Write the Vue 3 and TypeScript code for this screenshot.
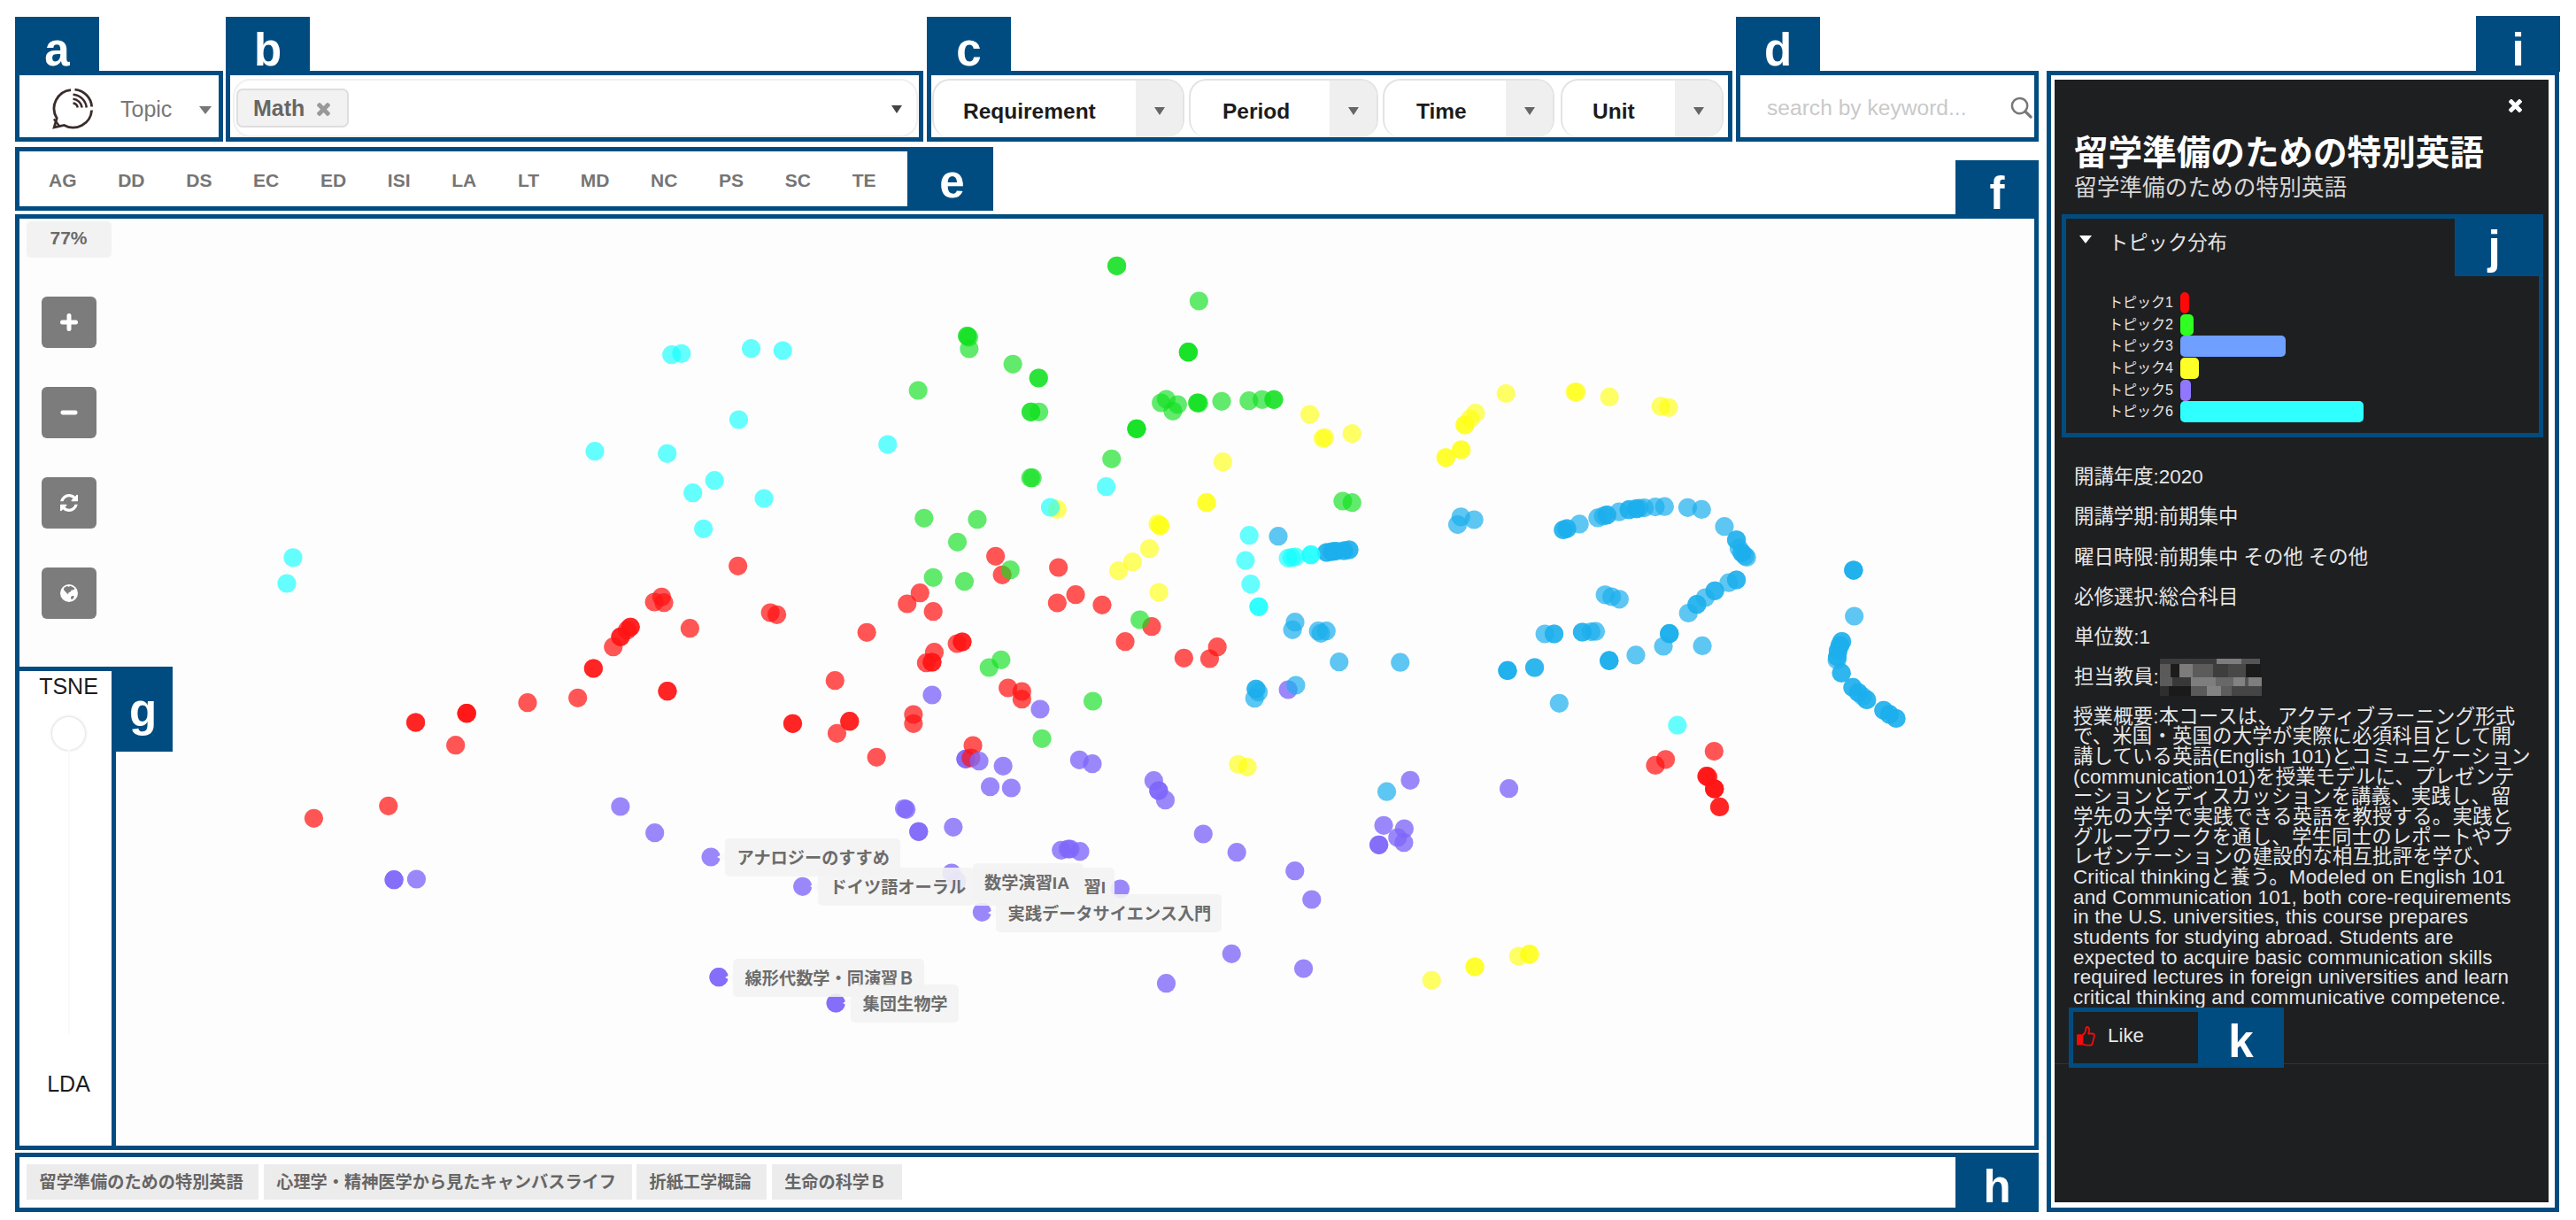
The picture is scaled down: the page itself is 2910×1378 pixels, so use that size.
<script setup lang="ts">
type Hue = 'red' | 'green' | 'cyan' | 'yellow' | 'blue' | 'purple'
// x, y, and how many courses share that spot
type Spot = [number, number, number?]

const fills: Record<Hue, string> = {
  red: 'rgba(255,20,20,.72)',
  green: 'rgba(15,225,30,.65)',
  cyan: 'rgba(20,255,255,.65)',
  yellow: 'rgba(255,255,20,.65)',
  blue: 'rgba(28,174,236,.71)',
  purple: 'rgba(125,102,250,.78)',
}

const clusters: { hue: Hue; spots: Spot[] }[] = [
  { hue: 'purple', spots: [
    [445.1, 993.7, 2], [470.5, 993], [700.9, 911], [739.7, 940.7], [803.1, 968], [906.7, 1001.3], [812, 1103.7, 2], [944.2, 1133, 2],
    [1053, 785], [1175, 801], [1091, 857.3, 2], [1133.2, 865.3], [1118.6, 888.7], [1142.4, 890],
    [1219.4, 858.3], [1234, 862.7], [1303.4, 881.7], [1308.9, 893, 2], [1316.5, 903.7], [1021.6, 913.3], [1023.7, 914.3],
    [1037.8, 939.3, 2], [1076.9, 934.3], [1198.8, 960.3], [1206.4, 959], [1209, 959], [1220, 961.7], [1359.3, 942],
    [1397.2, 962.7], [1462.8, 983.7], [1481.8, 1016], [1563.1, 932.3], [1586.4, 936], [1578.8, 946], [1585.9, 951.7],
    [1557.7, 954.3, 2], [1109.4, 1030.3], [1265.5, 1004], [1391.3, 1077.3], [1472.6, 1094], [1317.5, 1110.7],
    [1455.2, 779], [1593.1, 881.3], [1704.6, 890.7], [1075, 986], [1081, 995],
  ] },
  { hue: 'red', spots: [
    [833.7, 639.3], [739.2, 680], [747.5, 674.3], [750, 680.7], [870.2, 692], [877.6, 694.3], [779.4, 709.7],
    [712.2, 708.3, 2], [708.5, 711.7], [701, 719.3, 2], [692.8, 730.7], [670.4, 755, 2], [979.2, 714.3],
    [1124.7, 628.3], [1132.2, 649.3], [1039.3, 669.7], [1024.8, 682], [1054.2, 690.7], [1081.2, 727], [1087, 725, 2],
    [1055.5, 736.7], [1046.4, 748.7], [1053, 748, 2], [1195.7, 641], [1215.1, 671.7], [1194.4, 681], [1245, 683.3],
    [1301, 707.7], [1271.1, 724.7], [1337.4, 743.3], [1375.2, 730.7], [1366.5, 744], [1936.4, 848.6], [1881.6, 857.8],
    [1870, 864.4], [1928.1, 876.7, 2], [1929.7, 877.7], [1936.8, 891, 3], [1942.6, 911.4, 2], [354.5, 924.3],
    [438.8, 910.3], [469.6, 816, 2], [527.2, 805.7, 3], [514.7, 841.7], [596, 793.7], [652.7, 788.3], [754, 780.7, 2],
    [943.3, 768.7], [895.5, 817.3, 2], [945.5, 828.3], [959.8, 814.7, 2], [990.2, 855.3], [1138.7, 777], [1154.4, 781],
    [1154.4, 789.7], [1031.9, 807], [1031.9, 817.3], [1099.1, 842], [1096.9, 856],
  ] },
  { hue: 'purple', spots: [[1106.1, 859.7]] },
  { hue: 'green', spots: [
    [1092.8, 379.5, 2], [1094.5, 381], [1094.9, 394], [1144.2, 411.3], [1037.2, 441], [1043.9, 585.3], [1104, 586.7],
    [1081.6, 612.3], [1054.2, 652.3], [1089.5, 656.7], [1141.3, 643.7], [1130.9, 745.3], [1117.3, 754], [1261.6, 300.3, 2],
    [1354.4, 340], [1342.4, 397.7, 3], [1173.3, 427, 2], [1164.6, 465.3, 2], [1173.7, 465.3], [1311.7, 455],
    [1317.5, 451], [1330.4, 457], [1325, 464.3], [1352.8, 455, 2], [1354.4, 455.3], [1380.1, 453.3], [1410.8, 452.7],
    [1425.7, 451.3], [1439, 451.3, 2], [1284, 484.3, 3], [1255.8, 518.3], [1164.2, 539.7], [1166.2, 539.7],
    [1516.9, 566], [1527.3, 567.7], [1287.7, 700], [1234.6, 792], [1177.1, 834.3],
  ] },
  { hue: 'yellow', spots: [
    [1479.6, 468], [1494.5, 495.3], [1496.6, 494.3], [1527.3, 489.7], [1381.4, 521.7], [1363.1, 567.7, 2], [1308, 591.7],
    [1310.5, 593.7, 2], [1298.5, 619.7], [1279.4, 634.7], [1263.6, 644.7], [1309.2, 669], [1194.4, 575.3],
    [1701.3, 444.5], [1666.9, 466.6], [1660.7, 473], [1654.9, 480, 2], [1650.7, 508, 2], [1633.3, 516.8, 2],
    [1779.2, 442.8], [1780.9, 442.8], [1818.2, 448.4], [1876.2, 458.9], [1885, 460.3], [1398.9, 863.3], [1409.2, 866.3],
    [1617.3, 1107.3], [1666.1, 1092, 2], [1715.4, 1080], [1727.9, 1077.7, 2],
  ] },
  { hue: 'blue', spots: [
    [1444, 605.7], [1498.7, 624, 2], [1504.9, 623, 2], [1509, 622.5, 2], [1518.2, 622, 2], [1524, 621, 2], [1463, 702.7],
    [1460.1, 711.3], [1489.2, 712.7], [1492.1, 715.3], [1498.3, 712.7], [1512.8, 747.7], [1581.8, 748.2],
    [1650.3, 583.8], [1646.6, 592.6], [1665.2, 587], [1766, 598.5, 2], [1770.1, 597.1, 2], [1784.2, 591.9],
    [1804.9, 584.9], [1811.2, 582.8], [1815.3, 581.7, 2], [1829, 578.2], [1840.2, 575.7, 2], [1848.5, 574.7, 2],
    [1851.8, 574], [1857.6, 573.6], [1870, 572.6], [1880.4, 572.2], [1906.5, 573.3], [1922.3, 575.4], [1948, 594.7],
    [1961.6, 609.8, 2], [1964.5, 619.2], [1967.9, 624.5, 2], [1971.2, 628], [1973.2, 629.4], [1952.9, 658.2],
    [1961.6, 655, 2], [1937.2, 667.3, 2], [1926.4, 675], [1916.9, 682.7, 2], [1907.3, 692.5], [1813.2, 671.8],
    [1820.7, 674], [1829.4, 676.8], [1745.2, 716], [1755.6, 716, 2], [1787.5, 714, 2], [1797.5, 713.6], [1802.5, 713.2],
    [1885.8, 715.7, 3], [1879.1, 730], [1923.1, 729.4], [1848, 739.9], [1817.8, 746.2, 3], [1703, 757.4, 3],
    [1733.6, 754, 2], [1761.4, 794.3], [2093.9, 644.1, 3], [2094.7, 696], [2080.6, 724.5, 2], [2078.5, 729, 2],
    [2076.5, 735, 2], [2075.6, 742, 2], [2075.2, 745.5], [2080.2, 760.2, 2], [2093, 776.4, 2], [2099.3, 782.3, 2],
    [2104.2, 786.5], [2108.8, 790.4, 2], [2127.9, 802.3, 2], [2134.5, 806.9, 2], [2142, 811.5, 2], [1566.6, 894.2],
    [1463.9, 774], [1418.9, 778.3, 2], [1417.3, 788.7], [1421.6, 781.7],
  ] },
  { hue: 'cyan', spots: [
    [758.7, 400.7], [769.9, 399.3], [848.6, 393.7], [884.3, 396], [834.5, 474], [672, 509.7], [753.7, 512.3],
    [1002.8, 502], [807.2, 542.7], [782.7, 556.7], [863.1, 563], [794.7, 597.3], [331, 629.8], [324, 659],
    [1186.5, 573], [1249.6, 549.7], [1411.2, 604.7], [1407, 633], [1412.9, 659.7], [1422, 685.3, 2], [1455.2, 630.3],
    [1459.3, 629.7], [1463.5, 629], [1480.9, 626.7, 2], [1894.9, 819.2],
  ] },
]

const dots = clusters.flatMap(({ hue, spots }) =>
  spots.flatMap(([x, y, n = 1]) => Array.from({ length: n }, () => ({ x, y, fill: fills[hue] }))),
)

const tips = [
  { text: 'アナロジーのすすめ', x: 819, y: 947, arrow: true },
  { text: 'ドイツ語オーラル', x: 924, y: 980, w: 176, arrow: true },
  { text: '習I', x: 1100, y: 980, w: 159, arrow: false, end: true },
  { text: '数学演習IA', x: 1098.5, y: 975, w: 125, arrow: false },
  { text: '実践データサイエンス入門', x: 1125, y: 1010, arrow: true },
  { text: '線形代数学・同演習Ｂ', x: 828, y: 1083, w: 216, arrow: true },
  { text: '集団生物学', x: 961, y: 1112, arrow: true },
]

const filters = [
  { name: 'Requirement', w: 285, pad: 33, gap: 5 },
  { name: 'Period', w: 214, pad: 36, gap: 5 },
  { name: 'Time', w: 194, pad: 36, gap: 7 },
  { name: 'Unit', w: 184, pad: 34, gap: 0 },
]
const depts = ['AG', 'DD', 'DS', 'EC', 'ED', 'ISI', 'LA', 'LT', 'MD', 'NC', 'PS', 'SC', 'TE']
const history = ['留学準備のための特別英語', '心理学・精神医学から見たキャンバスライフ', '折紙工学概論', '生命の科学Ｂ']

const topics = [
  { name: 'トピック1', w: 10, color: '#ff0808' },
  { name: 'トピック2', w: 15, color: '#2fff21' },
  { name: 'トピック3', w: 119, color: '#6f9fff' },
  { name: 'トピック4', w: 21, color: '#ffff28' },
  { name: 'トピック5', w: 12, color: '#8f78ff' },
  { name: 'トピック6', w: 207, color: '#30ffff' },
]
const facts = ['開講年度:2020', '開講学期:前期集中', '曜日時限:前期集中 その他 その他', '必修選択:総合科目', '単位数:1']
const summary = [
  '授業概要:本コースは、アクティブラーニング形式',
  'で、米国・英国の大学が実際に必須科目として開',
  '講している英語(English 101)とコミュニケーション',
  '(communication101)を授業モデルに、プレゼンテ',
  'ーションとディスカッションを講義、実践し、留',
  '学先の大学で実践できる英語を教授する。実践と',
  'グループワークを通し、学生同士のレポートやプ',
  'レゼンテーションの建設的な相互批評を学び、',
  'Critical thinkingと養う。Modeled on English 101',
  'and Communication 101, both core-requirements',
  'in the U.S. universities, this course prepares',
  'students for studying abroad. Students are',
  'expected to acquire basic communication skills',
  'required lectures in foreign universities and learn',
  'critical thinking and communicative competence.',
]
// x, y, w, h, grey
const mosaic: [number, number, number, number, string][] = [
  [0, 0, 64, 6, '#3c3c3d'], [64, 0, 28, 6, '#7d7d7d'], [92, 0, 21, 6, '#555'],
  [0, 6, 12, 15, '#5a5a5b'], [12, 6, 10, 15, '#1c1c1d'], [22, 6, 15, 15, '#7c7c7c'], [37, 6, 23, 15, '#5b5b5b'],
  [60, 6, 17, 15, '#3e3e3f'], [77, 6, 20, 15, '#484849'], [97, 6, 17, 15, '#1b1b1c'],
  [0, 21, 14, 10, '#5b5b5b'], [14, 21, 21, 10, '#383839'], [35, 21, 28, 10, '#7e7e7e'], [63, 21, 20, 10, '#686868'],
  [83, 21, 13, 10, '#828282'], [96, 21, 4, 10, '#555'], [100, 21, 15, 10, '#7e7e7e'],
  [0, 31, 10, 11, '#2e2e2f'], [10, 31, 25, 11, '#1a1a1b'], [35, 31, 18, 11, '#5a5a5a'], [53, 31, 16, 11, '#838383'],
  [69, 31, 12, 11, '#5d5d5d'], [81, 31, 34, 11, '#454546'],
]
const times =
  'M1298 1322q0 40-28 68l-136 136q-28 28-68 28t-68-28l-294-294-294 294q-28 28-68 28t-68-28l-136-136q-28-28-28-68t28-68l294-294-294-294q-28-28-28-68t28-68l136-136q28-28 68-28t68 28l294 294 294-294q28-28 68-28t68 28l136 136q28 28 28 68t-28 68l-294 294 294 294q28 28 28 68z'
</script>

<template>
  <div class="page">
    <main class="left">
      <div class="topbar">
        <section class="frame view">
          <span class="tab above">a</span>
          <svg class="logo" viewBox="0 0 47 47" fill="none" stroke="#3a2c2b" stroke-width="2.8">
            <path d="M21 2.6A21 21 0 0 0 5.2 34.5L2.2 44.8 13.5 42.4A21 21 0 0 0 44.6 25.5" />
            <path d="M25.5 2.2a21 21 0 0 1 19.2 19.3" />
            <path d="M1.8 35.5l6.5 8" stroke-width="2.2" />
            <path d="M23.5 7.8a16.5 16.5 0 0 1 15.3 14.7M23.5 12.8a11.3 11.3 0 0 1 10.2 9.7M23.5 17.6a6 6 0 0 1 5.2 4.9" stroke-width="2.5" />
          </svg>
          <span class="topic">Topic</span>
          <i class="caret big"></i>
        </section>
        <section class="frame query">
          <span class="tab above">b</span>
          <div class="combo">
            <span class="chip">Math
              <svg viewBox="110 366 1188 1188"><path :d="times" fill="#999" /></svg>
            </span>
            <i class="caret dark"></i>
          </div>
        </section>
        <section class="frame filters">
          <span class="tab above">c</span>
          <div v-for="f in filters" :key="f.name" class="select" :style="{ width: f.w + 'px', marginRight: f.gap + 'px' }">
            <span :style="{ paddingLeft: f.pad + 'px' }">{{ f.name }}</span>
            <b><i class="caret"></i></b>
          </div>
        </section>
        <section class="frame search">
          <span class="tab above">d</span>
          <span>search by keyword...</span>
          <svg viewBox="0 0 26 26" fill="none" stroke="#777" stroke-width="2.6">
            <circle cx="11" cy="11" r="9" /><path d="M17.5 17.5L24 24" stroke-width="3.4" stroke-linecap="round" />
          </svg>
        </section>
      </div>

      <section class="frame depts">
        <span v-for="d in depts" :key="d">{{ d }}</span>
        <span class="tab side">e</span>
      </section>

      <section class="frame map">
        <span class="tab corner">f</span>
        <svg class="plot" viewBox="22 247 2276 1047">
          <circle v-for="(d, i) in dots" :key="i" :cx="d.x" :cy="d.y" r="10.6" :fill="d.fill" />
        </svg>
        <span
          v-for="t in tips" :key="t.text" class="tip" :class="{ arrow: t.arrow, end: t.end }"
          :style="{ left: t.x - 22 + 'px', top: t.y - 247 + 'px', width: t.w ? t.w + 'px' : undefined }"
        >{{ t.text }}</span>
        <div class="tools">
          <span class="zoom">77%</span>
          <div class="buttons">
            <button><svg viewBox="0 0 20 20"><path d="M10 2.5v15M2.5 10h15" stroke="#fff" stroke-width="5" stroke-linecap="round" /></svg></button>
            <button><svg viewBox="0 0 20 20"><path d="M2.8 10h14.4" stroke="#fff" stroke-width="4.8" stroke-linecap="round" /></svg></button>
            <button><svg viewBox="0 128 1536 1536"><g fill="#fff"><path d="M1511 1056q0 5-1 7-64 268-268 434.5t-478 166.500q-146 0-282.500-55t-243.500-157l-129 129q-19 19-45 19t-45-19-19-45v-448q0-26 19-45t45-19h448q26 0 45 19t19 45-19 45l-137 137q71 66 161 102t187 36q134 0 250-65t186-179q11-17 53-117 8-23 30-23h192q13 0 22.500 9.500t9.500 22.500z" /><path d="M1536 256v448q0 26-19 45t-45 19h-448q-26 0-45-19t-19-45 19-45l138-138q-148-137-349-137-134 0-250 65t-186 179q-11 17-53 117-8 23-30 23h-199q-13 0-22.500-9.500t-9.500-22.500v-7q65-268 270-434.500t480-166.500q146 0 284 55.500t245 156.500l130-129q19-19 45-19t45 19 19 45z" /></g></svg></button>
            <button><svg viewBox="0 0 20 20"><circle cx="10" cy="10" r="10" fill="#fff" /><path d="M4.500 3.800L7.500 2l2.500.8 1.500-1 3 1.400 2.200 1.800-1.700 1.300-2.500.4-.8 1.800-2 .6-.7 2.200-1.800-1.500-2.100-2.200-1.300-1.500zM12 14l2.500-1.200 1.400 1.300-1.600 2.300-1.900.6z" fill="#7c7c7c" /></svg></button>
          </div>
          <section class="blend">
            <span class="tab gtab">g</span>
            <span>TSNE</span>
            <i class="knob"></i>
            <i class="track"></i>
            <span>LDA</span>
          </section>
        </div>
      </section>

      <section class="frame history">
        <span v-for="h in history" :key="h" class="tag">{{ h }}</span>
        <span class="tab htab">h</span>
      </section>
    </main>

    <aside class="frame detail">
      <span class="tab itab">i</span>
      <div class="card">
        <svg class="close" viewBox="110 366 1188 1188"><path :d="times" fill="#fff" /></svg>
        <h1>留学準備のための特別英語</h1>
        <h2>留学準備のための特別英語</h2>
        <section class="chart">
          <span class="tab jtab">j</span>
          <div class="head"><i class="caret white"></i><span>トピック分布</span></div>
          <div v-for="t in topics" :key="t.name" class="row">
            <span>{{ t.name }}</span>
            <i :style="{ width: t.w + 'px', background: t.color }"></i>
          </div>
        </section>
        <div class="facts">
          <p v-for="f in facts" :key="f">{{ f }}</p>
          <p>担当教員:<svg class="mosaic" viewBox="0 0 115 42"><rect v-for="(m, i) in mosaic" :key="i" :x="m[0]" :y="m[1]" :width="m[2]" :height="m[3]" :fill="m[4]" /></svg></p>
        </div>
        <div class="summary"><div v-for="s in summary" :key="s">{{ s }}</div></div>
        <div class="foot">
          <div class="like">
            <svg viewBox="0 0 21 23" fill="none" stroke="#f00d0d" stroke-width="1.8" stroke-linejoin="round">
              <path d="M6.500 10.200C9 8.800 10 6.500 10.200 4c.1-1.800.4-3 1.600-3 2 0 2.600 2 2.200 4.200L13.300 8.500h4.200c2 0 2.900 1.500 2.300 3l-2 8c-.4 1.600-1.300 2.200-3 2.200h-3c-2 0-3.300-1.200-5.300-1.400z" />
              <path d="M1 10.200h4.200v10.300H1z" fill="#f00d0d" />
            </svg>
            <span>Like</span>
          </div>
          <span class="tab ktab">k</span>
        </div>
      </div>
    </aside>
  </div>
</template>

<style>
body { margin: 0; background: #fff; }
</style>

<style scoped>
.page {
  display: flex; gap: 9px; box-sizing: border-box; width: 2910px; height: 1378px; padding: 80px 19px 9px 17px;
  font-family: "Liberation Sans", "Noto Sans CJK JP", sans-serif; overflow: hidden; background: #fff;
}
.frame { position: relative; box-sizing: border-box; border: 5px solid #004c80; display: flex; }
.tab {
  position: absolute; width: 95px; background: #004c80; color: #fff; text-align: center;
  font: bold 51px "Liberation Sans", sans-serif;
}
.above { left: -5px; bottom: 100%; height: 61px; line-height: 75px; margin-bottom: 5px; }
.left { width: 2286px; }
.topbar { display: flex; height: 80px; }
.caret { width: 0; height: 0; border: 6.500px solid transparent; border-top: 9px solid #666; border-bottom: 0; }
.caret.big { border-width: 9px 7.500px 0; border-top-color: #777; margin: 8px 0 0 1px; }
.caret.dark { border-top-color: #444; margin-top: 2px; }
.caret.white { border-width: 9px 7px 0; border-top-color: #fff; }

.view { width: 235px; align-items: center; }
.logo { width: 47px; height: 47px; margin: 5px 0 0 37px; }
.topic { margin: 7px 0 0 30px; width: 88px; font-size: 25px; color: #777; }
.query { width: 788px; margin-left: 3px; padding: 4px 1px 0 3px; }
.combo {
  flex: 1; box-sizing: border-box; height: 66px; border: 2px solid #f0f0f0; border-radius: 20px;
  display: flex; align-items: center; justify-content: space-between; padding: 0 16px 0 2px;
}
.chip {
  box-sizing: border-box; width: 127px; height: 44px; border: 2px solid #dedede; border-radius: 7px; background: #f2f2f2;
  display: flex; align-items: center; gap: 14px; padding-left: 17px; font-weight: bold; font-size: 25px; color: #666;
}
.chip svg { width: 15px; height: 15px; margin-top: 2px; }
.filters { width: 910px; margin-left: 4px; padding: 4px 0 0 1px; }
.select {
  box-sizing: border-box; height: 66px; border: 2px solid #e3e3e3; border-bottom: 0; border-radius: 20px; overflow: hidden;
  display: flex; justify-content: space-between; color: #1c1c1c; font-weight: bold; font-size: 24.500px; line-height: 70px;
}
.select b { box-sizing: border-box; width: 53px; background: #efefef; display: flex; align-items: center; justify-content: center; padding: 5px 0 0 1px; }
.search { width: 342px; margin-left: 4px; align-items: center; padding: 3px 0 0 30px; font-size: 24.600px; color: #c9c9c9; }
.search svg { width: 25px; height: 25px; margin-left: 49px; }

.depts {
  width: 1105px; height: 72px; margin-top: 6px; padding: 3px 0 0 33px; align-items: center; gap: 46.700px;
  color: #757575; font-weight: bold; font-size: 21px;
}
.side { right: -5px; top: -5px; width: 97px; height: 72px; line-height: 79px; text-indent: 4px; }

.map { height: 1057px; margin-top: 4px; background: #fdfdfd; }
.map .corner { right: -5px; top: -66px; width: 94px; height: 66px; line-height: 76px; }
.plot { position: absolute; left: 0; top: 0; width: 2276px; height: 1047px; }
.tip {
  position: absolute; box-sizing: border-box; height: 43px; line-height: 46px; padding: 0 12px 0 13.600px; border-radius: 5px; white-space: nowrap;
  background: rgba(243, 243, 243, .9); color: #6c6c6c; font-size: 19.200px; font-weight: bold;
}
.tip.end { text-align: right; padding-right: 10px; border-radius: 0 5px 5px 0; }
.tip.arrow::before {
  content: ""; position: absolute; left: -9px; top: 16px; border: 5px solid transparent; border-right: 9px solid #fafafa; border-left: 0;
}
.tools { position: relative; width: 109px; display: flex; flex-direction: column; align-items: center; }
.zoom {
  width: 96px; height: 41px; margin-top: 3px; margin-left: 2px; border-radius: 5px; background: #f2f2f2;
  text-align: center; line-height: 38px; font-weight: bold; font-size: 21px; color: #6a6a6a;
}
.buttons { display: flex; flex-direction: column; gap: 44px; margin: 44px 0 0 3px; }
button {
  display: flex; align-items: center; justify-content: center; width: 62px; height: 58px; padding: 0 0 1px; border: 0;
  border-radius: 6px; background: #7c7c7c;
}
button svg { width: 20px; height: 20px; }
.blend {
  position: relative; box-sizing: border-box; width: 109px; height: 541px; margin-top: auto; border: solid #004c80;
  border-width: 5px 5px 0 0; background: #fff; display: flex; flex-direction: column; align-items: center;
  font-size: 25px; color: #1c1c1c; line-height: 29px; padding: 3px 0 55px 7px;
}
.gtab { left: 109px; top: -5px; width: 64px; height: 96px; line-height: 100px; text-indent: -3px; }
.knob { width: 37px; height: 37px; border-radius: 50%; background: #fff; box-shadow: 0 0 3px 1px #ddd; margin-top: 20px; box-sizing: border-box; }
.track { width: 2px; flex: 1; background: #fafafa; margin-bottom: 42px; }

.history { height: 67px; margin-top: 3px; padding: 8px 0 0 8px; gap: 5.500px; }
.tag { height: 40px; line-height: 41px; padding: 0 17.500px 0 14.500px; background: #ececec; font-size: 19.200px; font-weight: bold; color: #666; }
.htab { right: -5px; top: -5px; height: 67px; line-height: 77px; width: 94px; }

.detail { width: 579px; padding: 5px 7px 6px 4px; }
.itab { right: -6px; bottom: 100%; height: 63px; line-height: 78px; margin-bottom: 4px; }
.card { position: relative; width: 558px; background: #1e1f21; color: #e6e6e6; display: flex; flex-direction: column; }
.close { width: 15px; height: 15px; margin: 22px 0 0 513px; flex: none; }
h1 { margin: 18px 0 0 22px; font-size: 38.600px; line-height: 56px; color: #fff; font-weight: bold; white-space: nowrap; }
h2 { margin: 0 0 0 22px; font-size: 25.700px; line-height: 22px; font-weight: normal; color: #d6d6d6; }
.chart {
  position: relative; box-sizing: border-box; width: 544px; height: 252px; margin: 19px 0 0 8px; border: 5px solid #004c80; flex: none;
}
.jtab { right: 0; top: -1px; height: 66px; line-height: 68px; text-indent: -6px; }
.head { display: flex; align-items: center; height: 50px; margin-bottom: 32.500px; padding-left: 15px; font-size: 22.300px; }
.head span { margin-left: 19px; }
.head .caret { margin-top: -4px; }
.row { display: flex; align-items: center; height: 24.700px; font-size: 16px; line-height: 24px; }
.row span { width: 121px; text-align: right; }
.row i { height: 24px; margin-left: 8px; border-radius: 5px; }
.facts { margin: 22px 0 0 22px; font-size: 22.400px; }
.facts p { margin: 0; height: 45.300px; line-height: 45.300px; display: flex; align-items: center; }
.mosaic { width: 115px; height: 42px; margin-left: 1px; }
.summary { margin: 11px 0 0 21px; font-size: 22.400px; line-height: 22.660px; letter-spacing: .18px; white-space: nowrap; color: #e6e6e6; }
.summary div { height: 22.660px; }
.foot { display: flex; height: 68px; margin-top: -1px; padding-left: 16px; position: relative; background: linear-gradient(#333, #333) 0 63px / 100% 1px no-repeat; }
.like {
  box-sizing: border-box; width: 146px; border: 5px solid #004c80; border-right: 0; background: #1e1f21;
  display: flex; align-items: center; gap: 14px; padding: 0 0 3px 4px; font-size: 22.400px;
}
.like svg { width: 21px; height: 23px; }
.ktab { position: static; width: 97px; height: 68px; line-height: 77px; }
</style>
